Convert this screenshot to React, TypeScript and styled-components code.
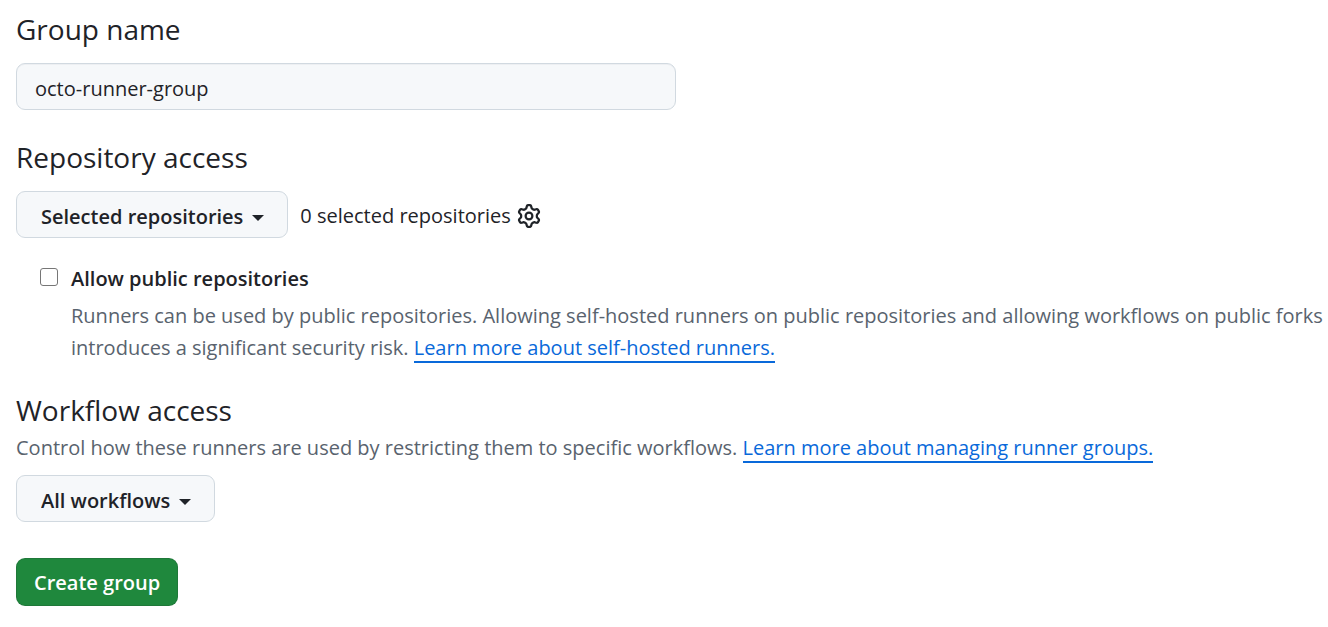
import React from "react";
import styled, { createGlobalStyle } from "styled-components";

const color = {
  text: "#1f2328",
  muted: "#59636e",
  border: "#d1d9e0",
  surface: "#f6f8fa",
  link: "#0969da",
  green: "#1f883d",
};

const GlobalStyle = createGlobalStyle`
  *, *::before, *::after { box-sizing: border-box; }
  body {
    margin: 0;
    background: #ffffff;
    color: ${color.text};
    font-family: "Segoe UI", "Open Sans", "Noto Sans", sans-serif;
    font-size: 20px;
    line-height: 32px;
  }
`;

const Form = styled.form`
  display: flex;
  flex-direction: column;
  padding: 7px 0 20px 16px;
`;

const Section = styled.section`
  display: flex;
  flex-direction: column;
  align-items: flex-start;
  margin-bottom: ${(p: { $space: number }) => p.$space}px;
`;

const Heading = styled.h2`
  margin: 0;
  font-size: 28px;
  font-weight: 400;
  line-height: 44px;
`;

const TextInput = styled.input`
  width: 660px;
  max-width: 100%;
  height: 47px;
  margin-top: 12px;
  padding: 4px 18px 0;
  border: 1px solid ${color.border};
  border-radius: 9px;
  background: ${color.surface};
  box-shadow: inset 0 1px 0 rgba(31, 35, 40, 0.04);
  color: inherit;
  font: inherit;
`;

const Row = styled.div`
  display: flex;
  flex-wrap: wrap;
  align-items: center;
  gap: 12px;
  margin-top: 12px;
`;

const SelectBox = styled.div`
  display: inline-grid;
  align-items: center;
  justify-items: end;
  margin-top: ${(p: { $top?: number }) => p.$top ?? 0}px;

  > * { grid-area: 1 / 1; }
`;

const Select = styled.select`
  appearance: none;
  field-sizing: content;
  height: 47px;
  padding: 4px 44px 0 24px;
  border: 1px solid ${color.border};
  border-radius: 9px;
  background: ${color.surface};
  color: inherit;
  font: inherit;
  font-weight: 600;
  cursor: pointer;
`;

const Caret = styled.span`
  margin-right: 24px;
  margin-top: 6px;
  border: 6px solid transparent;
  border-top-color: ${color.text};
  border-bottom: 0;
  pointer-events: none;
`;

const Selected = styled.div`
  display: flex;
  align-items: center;
  gap: 6px;
  padding-top: 2px;
`;

const IconButton = styled.button`
  display: flex;
  padding: 0;
  border: 0;
  background: none;
  color: inherit;
  cursor: pointer;
`;

const Option = styled.div`
  display: grid;
  grid-template-columns: 19px 1fr;
  column-gap: 12px;
  margin-top: 25px;
  padding-left: 24px;
`;

const Checkbox = styled.input`
  appearance: none;
  width: 18px;
  height: 18px;
  margin: 5px 0 0;
  border: 1px solid #767676;
  border-radius: 3px;
  background: #ffffff;

  &:checked {
    border-color: ${color.link};
    background: ${color.link};
  }
`;

const OptionLabel = styled.label`
  font-weight: 600;
`;

const Note = styled.p`
  margin: 0;
  color: ${color.muted};
`;

const OptionNote = styled(Note)`
  grid-column: 2;
  margin-top: 5px;
`;

const Link = styled.a`
  border-bottom: 2px solid ${color.link};
  color: ${color.link};
  text-decoration: none;
`;

const SubmitButton = styled.button`
  align-self: flex-start;
  height: 48px;
  padding: 2px 17px 0;
  border: 1px solid rgba(31, 35, 40, 0.15);
  border-radius: 9px;
  background: ${color.green};
  color: #ffffff;
  font: inherit;
  font-weight: 600;
  cursor: pointer;
`;

const GearIcon = () => (
  <svg width="24" height="24" viewBox="0 0 16 16" fill="currentColor" aria-hidden="true">
    <path d="M8 0a8.2 8.2 0 0 1 .701.031C9.444.095 9.99.645 10.16 1.29l.288 1.107c.018.066.079.158.212.224.231.114.454.243.668.386.123.082.233.09.299.071l1.103-.303c.644-.176 1.392.021 1.82.63.27.385.506.792.704 1.218.315.675.111 1.422-.364 1.891l-.814.806c-.049.048-.098.147-.088.294.016.257.016.515 0 .772-.01.147.038.246.088.294l.814.806c.475.469.679 1.216.364 1.891a7.977 7.977 0 0 1-.704 1.217c-.428.61-1.176.807-1.82.63l-1.102-.302c-.067-.019-.177-.011-.3.071a5.909 5.909 0 0 1-.668.386c-.133.066-.194.158-.211.224l-.29 1.106c-.168.646-.715 1.196-1.458 1.26a8.006 8.006 0 0 1-1.402 0c-.743-.064-1.289-.614-1.458-1.26l-.289-1.106c-.018-.066-.079-.158-.212-.224a5.738 5.738 0 0 1-.668-.386c-.123-.082-.233-.09-.299-.071l-1.103.303c-.644.176-1.392-.021-1.82-.63a8.12 8.12 0 0 1-.704-1.218c-.315-.675-.111-1.422.363-1.891l.815-.806c.05-.048.098-.147.088-.294a6.214 6.214 0 0 1 0-.772c.01-.147-.038-.246-.088-.294l-.815-.806C.635 6.045.431 5.298.746 4.623a7.92 7.92 0 0 1 .704-1.217c.428-.61 1.176-.807 1.82-.63l1.102.302c.067.019.177.011.3-.071.214-.143.437-.272.668-.386.133-.066.194-.158.211-.224l.29-1.106C6.009.645 6.556.095 7.299.03 7.53.01 7.764 0 8 0Zm-.571 1.525c-.036.003-.108.036-.137.146l-.289 1.105c-.147.561-.549.967-.998 1.189-.173.086-.34.183-.5.29-.417.278-.97.423-1.529.27l-1.103-.303c-.109-.03-.175.016-.195.045-.22.312-.412.644-.573.99-.014.031-.021.11.059.19l.815.806c.411.406.562.957.53 1.456a4.709 4.709 0 0 0 0 .582c.032.499-.119 1.05-.53 1.456l-.815.806c-.081.08-.073.159-.059.19.162.346.353.677.573.989.02.03.085.076.195.046l1.102-.303c.56-.153 1.113-.008 1.53.27.161.107.328.204.501.29.447.222.85.629.997 1.189l.289 1.105c.029.109.101.143.137.146a6.6 6.6 0 0 0 1.142 0c.036-.003.108-.036.137-.146l.289-1.105c.147-.561.549-.967.998-1.189.173-.086.34-.183.5-.29.417-.278.97-.423 1.529-.27l1.103.303c.109.029.175-.016.195-.045.22-.313.411-.644.573-.99.014-.031.021-.11-.059-.19l-.815-.806c-.411-.406-.562-.957-.53-1.456a4.709 4.709 0 0 0 0-.582c-.032-.499.119-1.05.53-1.456l.815-.806c.081-.08.073-.159.059-.19a6.464 6.464 0 0 0-.573-.989c-.02-.03-.085-.076-.195-.046l-1.102.303c-.56.153-1.113.008-1.53-.27a4.44 4.44 0 0 0-.501-.29c-.447-.222-.85-.629-.997-1.189l-.289-1.105c-.029-.11-.101-.143-.137-.146a6.6 6.6 0 0 0-1.142 0ZM11 8a3 3 0 1 1-6 0 3 3 0 0 1 6 0ZM9.5 8a1.5 1.5 0 1 0-3.001.001A1.5 1.5 0 0 0 9.5 8Z" />
  </svg>
);

export default function App() {
  return (
    <>
      <GlobalStyle />
      <Form onSubmit={(e) => e.preventDefault()}>
        <Section $space={25}>
          <Heading>
            <label htmlFor="group-name">Group name</label>
          </Heading>
          <TextInput id="group-name" type="text" defaultValue="octo-runner-group" />
        </Section>

        <Section $space={24}>
          <Heading id="repository-access">Repository access</Heading>
          <Row>
            <SelectBox>
              <Select aria-labelledby="repository-access">
                <option>Selected repositories</option>
              </Select>
              <Caret />
            </SelectBox>
            <Selected>
              0 selected repositories
              <IconButton type="button" aria-labelledby="repository-access">
                <GearIcon />
              </IconButton>
            </Selected>
          </Row>
          <Option>
            <Checkbox id="allow-public" type="checkbox" aria-describedby="allow-public-note" />
            <OptionLabel htmlFor="allow-public">Allow public repositories</OptionLabel>
            <OptionNote id="allow-public-note">
              Runners can be used by public repositories. Allowing self-hosted runners on public
              repositories and allowing workflows on public forks introduces a significant security
              risk. <Link href="#self-hosted-runners">Learn more about self-hosted runners.</Link>
            </OptionNote>
          </Option>
        </Section>

        <Section $space={36}>
          <Heading id="workflow-access">Workflow access</Heading>
          <Note>
            Control how these runners are used by restricting them to specific workflows.{" "}
            <Link href="#runner-groups">Learn more about managing runner groups.</Link>
          </Note>
          <SelectBox $top={11}>
            <Select aria-labelledby="workflow-access">
              <option>All workflows</option>
            </Select>
            <Caret />
          </SelectBox>
        </Section>

        <SubmitButton type="submit">Create group</SubmitButton>
      </Form>
    </>
  );
}
